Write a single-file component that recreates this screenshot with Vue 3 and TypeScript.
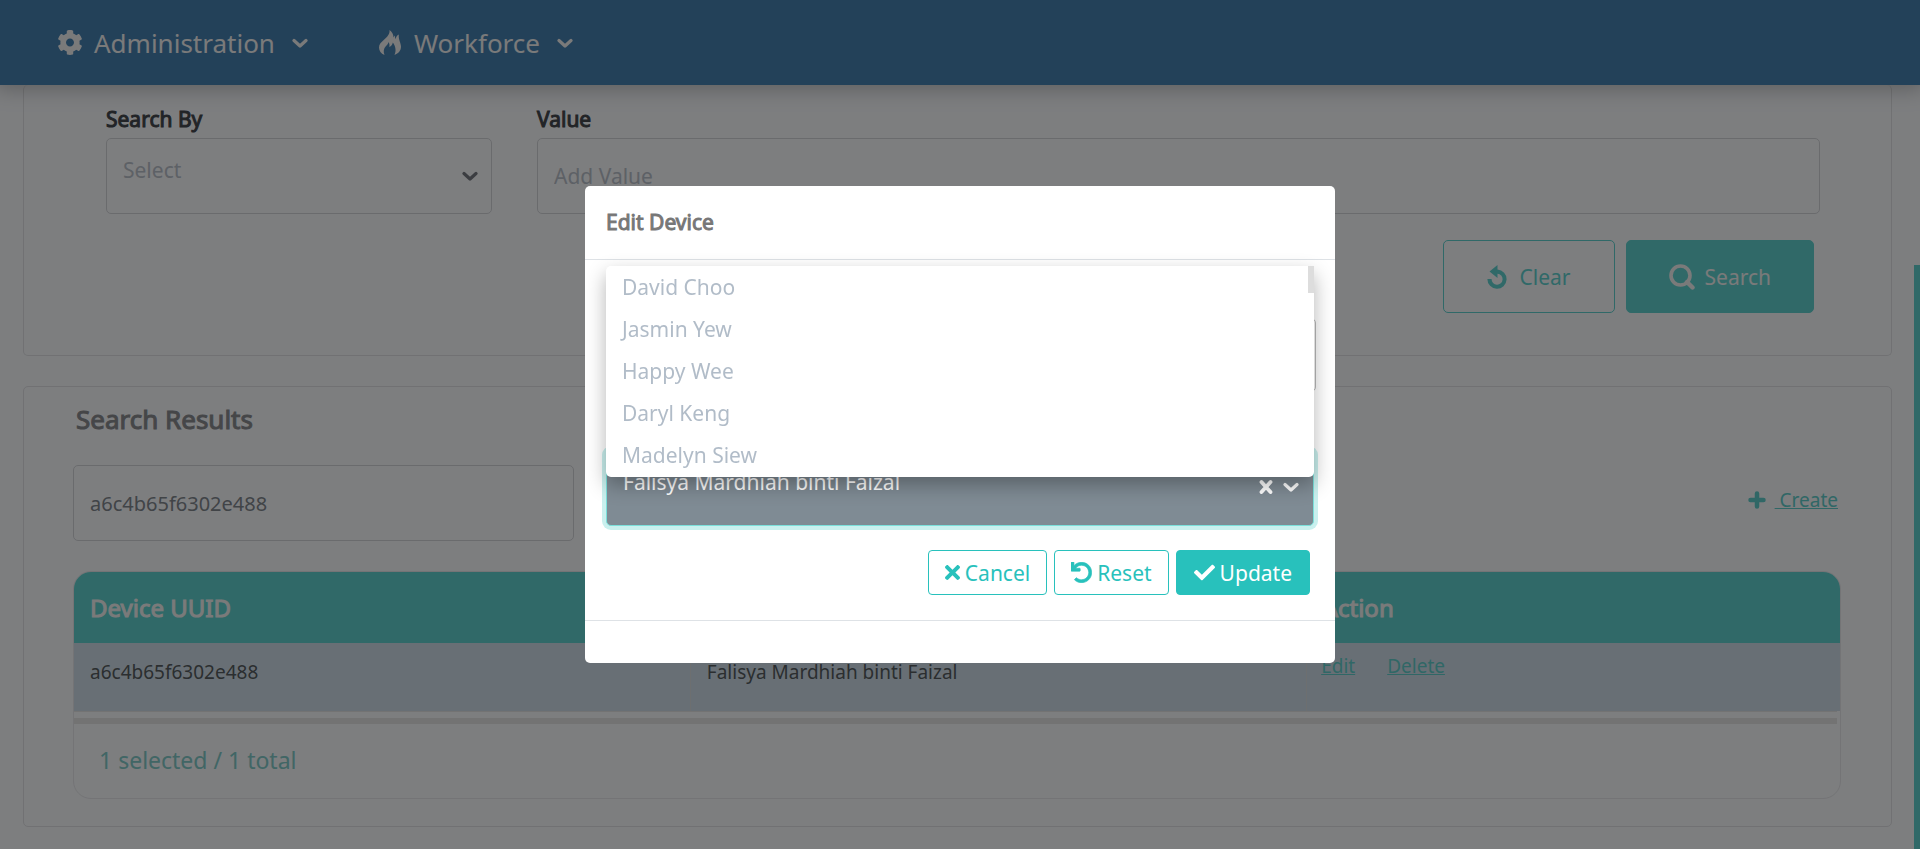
<script setup lang="ts">
import { ref } from 'vue'

const chevron = 'M2 3.500 L8 9 L14 3.500'
const menus = [
  { label: 'Administration', icon: 'gear' },
  { label: 'Workforce', icon: 'fire' },
]
const people = ['David Choo', 'Jasmin Yew', 'Happy Wee', 'Daryl Keng', 'Madelyn Siew']
const filter = ref('a6c4b65f6302e488')
const value = ref('')
const selected = 'Falisya Mardhiah binti Faizal'
const rows = [{ uuid: 'a6c4b65f6302e488', name: selected }]
</script>

<template>
  <div class="app">
    <header class="nav">
      <button v-for="m in menus" :key="m.label" type="button" class="nav-item">
        <svg v-if="m.icon === 'gear'" class="nav-icon" viewBox="16 8 480 496" aria-hidden="true">
          <path fill="currentColor" d="M487.4 315.7l-42.6-24.6c4.3-23.2 4.3-47 0-70.2l42.6-24.6c4.9-2.8 7.1-8.6 5.5-14-11.1-35.6-30-67.8-54.7-94.6-3.8-4.1-10-5.1-14.8-2.3L380.8 110c-17.9-15.4-38.5-27.3-60.8-35.1V25.8c0-5.6-3.9-10.5-9.4-11.7-36.7-8.2-74.3-7.8-109.2 0-5.5 1.2-9.4 6.1-9.4 11.7V75c-22.2 7.9-42.8 19.8-60.8 35.1L88.700 85.500c-4.900-2.800-11-1.900-14.800 2.300-24.700 26.700-43.600 58.900-54.700 94.600-1.700 5.400.6 11.200 5.500 14L67.300 221c-4.300 23.200-4.300 47 0 70.200l-42.600 24.600c-4.900 2.800-7.100 8.600-5.500 14 11.100 35.600 30 67.800 54.700 94.600 3.800 4.100 10 5.100 14.800 2.300l42.600-24.600c17.900 15.400 38.500 27.300 60.800 35.100v49.200c0 5.600 3.900 10.500 9.400 11.700 36.700 8.200 74.300 7.800 109.200 0 5.500-1.200 9.400-6.100 9.400-11.700v-49.200c22.200-7.900 42.800-19.800 60.800-35.100l42.600 24.600c4.900 2.800 11 1.900 14.800-2.300 24.700-26.700 43.600-58.900 54.700-94.600 1.500-5.500-.7-11.300-5.600-14.100zM256 336c-44.100 0-80-35.900-80-80s35.900-80 80-80 80 35.900 80 80-35.900 80-80 80z" />
        </svg>
        <svg v-else class="nav-icon" viewBox="0 0 24 25" aria-hidden="true">
          <path fill="currentColor" d="M11.500 0 C12 4 9.500 6.500 6.500 9.200 C3 12.300 1 14.300 1 17.500 C1 20.800 3 23.500 6.500 25 C5.200 21.500 5.500 18.500 8 16 C9.600 14.400 10.300 13.400 10.500 12 C11.500 13.500 11.700 15 11.300 17 C13.300 16 14.500 14.500 14.800 12.500 C17.500 16 18.500 20.500 16.500 25 C20.500 23.500 23 20.500 23 16.800 C23 12.800 20.300 10 20.800 4.500 C19 5.300 18 6.700 17.800 9 C17 7.800 16.800 6.800 17 5.500 C16.200 6 15.700 6.700 15.500 7.600 C15.500 4.500 14 1.700 11.500 0 Z" />
        </svg>
        <span>{{ m.label }}</span>
        <svg class="chev" viewBox="0 0 16 12" aria-hidden="true"><path :d="chevron" /></svg>
      </button>
    </header>

    <main class="content">
      <section class="card search-card">
        <div class="fields">
          <div class="field">
            <label for="search-by">Search By</label>
            <div class="select-wrap">
              <select id="search-by" class="control select">
                <option>Select</option>
              </select>
              <svg class="chev" viewBox="0 0 16 12" aria-hidden="true"><path :d="chevron" /></svg>
            </div>
          </div>
          <div class="field">
            <label for="search-value">Value</label>
            <input id="search-value" v-model="value" class="control" type="text" placeholder="Add Value" />
          </div>
        </div>
        <div class="actions">
          <button type="button" class="btn large outline">
            <svg class="icon-clear" viewBox="0 0 20 24" aria-hidden="true">
              <path fill="currentColor" d="M10.500 0 L10.500 4.600 A9.600 9.600 0 1 1 .400 14 L4.600 14 A5.500 5.500 0 1 0 10.500 8.700 L10.500 13 L2.500 6.500 Z" />
            </svg>
            Clear
          </button>
          <button type="button" class="btn large solid">
            <svg class="icon-search" viewBox="0 0 26 26" aria-hidden="true">
              <circle cx="11.500" cy="11.500" r="9.500" fill="none" stroke="currentColor" stroke-width="3.600" />
              <path d="M18 18 L23.500 23.500" stroke="currentColor" stroke-width="4.400" stroke-linecap="round" />
            </svg>
            Search
          </button>
        </div>
      </section>

      <section class="card result-card">
        <h2>Search Results</h2>
        <div class="toolbar">
          <input v-model="filter" class="control filter" type="text" aria-label="Filter results" />
          <a href="#create" class="create">
            <svg viewBox="0 0 18 18" aria-hidden="true"><path d="M9 2.500 V15.500 M2.500 9 H15.500" /></svg>
            <span>&nbsp;Create</span>
          </a>
        </div>
        <div class="grid">
          <table>
            <colgroup><col class="c-main" /><col class="c-main" /><col /></colgroup>
            <thead>
              <tr><th>Device UUID</th><th>User</th><th>Action</th></tr>
            </thead>
            <tbody>
              <tr v-for="r in rows" :key="r.uuid">
                <td>{{ r.uuid }}</td>
                <td>{{ r.name }}</td>
                <td class="links"><a href="#edit">Edit</a><a href="#delete">Delete</a></td>
              </tr>
            </tbody>
          </table>
          <div class="track"></div>
          <footer>{{ rows.length }} selected / {{ rows.length }} total</footer>
        </div>
      </section>
    </main>
    <div class="page-scroll"></div>

    <div class="overlay">
      <div class="modal" role="dialog" aria-modal="true" aria-labelledby="modal-title">
        <h3 id="modal-title">Edit Device</h3>
        <div class="modal-body">
          <input class="control uuid" type="text" aria-label="Device UUID" />
          <div class="picker-wrap">
            <div class="picker">
              <span class="picker-value">{{ selected }}</span>
              <button type="button" class="bare" aria-label="Clear selection">
                <svg class="clear-x" viewBox="0 0 14 16" aria-hidden="true"><path d="M2.500 3 L11.500 13 M11.500 3 L2.500 13" /></svg>
              </button>
              <button type="button" class="bare" aria-label="Toggle list">
                <svg class="chev" viewBox="0 0 16 12" aria-hidden="true"><path :d="chevron" /></svg>
              </button>
            </div>
            <ul class="menu" role="listbox" aria-label="Users">
              <li v-for="p in people" :key="p" role="option">{{ p }}</li>
              <li class="thumb" role="presentation"></li>
            </ul>
          </div>
          <div class="modal-actions">
            <button type="button" class="btn outline">
              <svg class="icon-x" viewBox="0 0 352 352" aria-hidden="true">
                <path fill="currentColor" d="M242.700 176 L342.800 75.900 c12.300-12.300 12.300-32.200 0-44.500 l-22.200-22.200 c-12.300-12.300-32.200-12.300-44.500 0 L176 109.300 L75.900 9.200 c-12.300-12.300-32.200-12.300-44.500 0 L9.200 31.400 c-12.300 12.300-12.300 32.200 0 44.500 L109.300 176 L9.200 276.100 c-12.300 12.300-12.300 32.200 0 44.500 l22.200 22.200 c12.300 12.300 32.200 12.300 44.500 0 L176 242.700 l100.100 100.100 c12.300 12.300 32.200 12.300 44.500 0 l22.200-22.200 c12.300-12.300 12.300-32.200 0-44.500 Z" />
              </svg>
              Cancel
            </button>
            <button type="button" class="btn outline">
              <svg class="icon-std" viewBox="0 0 512 512" aria-hidden="true">
                <path fill="currentColor" d="M212.333 224.333H12c-6.627 0-12-5.373-12-12V12C0 5.373 5.373 0 12 0h48c6.627 0 12 5.373 12 12v78.112C117.773 39.279 184.260 7.470 258.175 8.007c136.906.994 246.448 111.623 246.157 248.532C504.041 393.258 393.120 504 256.333 504c-64.089 0-122.496-24.313-166.510-64.215-5.099-4.622-5.334-12.554-.467-17.420l33.967-33.967c4.474-4.474 11.662-4.717 16.401-.525C170.760 415.336 211.580 432 256.333 432c97.268 0 176-78.716 176-176 0-97.267-78.716-176-176-176-58.496 0-110.280 28.476-142.274 72.333h98.274c6.627 0 12 5.373 12 12v48c0 6.627-5.373 12-12 12z" stroke="currentColor" stroke-width="16" />
              </svg>
              Reset
            </button>
            <button type="button" class="btn solid">
              <svg class="icon-std" viewBox="0 0 512 512" aria-hidden="true">
                <path fill="currentColor" d="M173.898 439.404l-166.400-166.400c-9.997-9.997-9.997-26.206 0-36.204l36.203-36.204c9.997-9.998 26.207-9.998 36.204 0L192 312.690 432.095 72.596c9.997-9.997 26.207-9.997 36.204 0l36.203 36.204c9.997 9.997 9.997 26.206 0 36.204l-294.400 294.401c-9.998 9.997-26.207 9.997-36.204-.001z" />
              </svg>
              Update
            </button>
          </div>
        </div>
      </div>
    </div>
  </div>
</template>

<style>
body { background: #fafcff; }
</style>

<style scoped>
.app {
  position: relative;
  min-height: 100vh;
  overflow: hidden;
  background: #fafcff;
  color: #393e46;
  font: 21px/30px "Noto Sans", sans-serif;
}
.app *, .app *::before { box-sizing: border-box; }
button, input, select { font: inherit; color: inherit; }
button { cursor: pointer; }
a { color: #61cfcc; }
svg { display: block; flex: none; }

.nav {
  position: relative;
  z-index: 1;
  display: flex;
  gap: 70px;
  height: 85px;
  padding: 0 58px;
  background: #4782b3;
  box-shadow: 0 0 20px 4px rgba(0, 0, 0, .25);
}
.nav-item {
  display: flex;
  align-items: center;
  padding: 0;
  border: 0;
  background: none;
  color: #f5f5f5;
  font-size: 26px;
}
.nav-icon { width: 24px; height: 25px; margin-right: 12px; }
.chev { width: 16px; height: 12px; }
.chev path { fill: none; stroke: currentColor; stroke-width: 3.200; stroke-linecap: round; stroke-linejoin: round; }
.nav-item .chev { margin-left: 17px; }

.content { padding: 0 28px 22px 23px; }
.card { border: 1px solid #e2e3e6; border-radius: 5px; }
.search-card { border-top: 0; padding: 16px 71px 42px 82px; }
.fields { display: grid; grid-template-columns: 386px 1fr; gap: 45px; }
.field label { display: block; height: 37px; line-height: 36px; color: #44484e; -webkit-text-stroke: 1px currentColor; }
.select-wrap { position: relative; }
.select-wrap .chev { position: absolute; right: 14px; top: 32px; color: #777b82; pointer-events: none; }
.control {
  display: block;
  width: 100%;
  height: 76px;
  padding: 0 16px;
  border: 1px solid #d5d7db;
  border-radius: 5px;
  background: transparent;
  outline: 0;
}
.control::placeholder { color: #bbc2cc; opacity: 1; }
.select { appearance: none; padding-bottom: 12px; color: #bbc2cc; }
.actions { display: flex; justify-content: flex-end; gap: 11px; margin: 26px 6px 0 0; }
.btn {
  display: flex;
  align-items: center;
  justify-content: center;
  gap: 5px;
  height: 45px;
  padding: 0 16px;
  border: 1px solid #28c1bc;
  border-radius: 4px;
  background: transparent;
  color: #28c1bc;
}
.btn.solid { padding: 0 17px; background: #28c1bc; color: #fff; }
.btn.large { height: 73px; gap: 13px; padding: 0 43px; border-color: #61d3d1; border-radius: 5px; color: #61d3d1; }
.btn.large.solid { gap: 10px; padding: 0 42px; background: #61d3d1; color: #f5f5f5; }
.icon-clear { width: 20px; height: 24px; }
.icon-search { width: 26px; height: 26px; }

.result-card { margin-top: 30px; padding: 14px 50px 27px 49px; }
h2 { margin: 0 0 0 3px; color: #8b8d91; font-size: 26px; font-weight: 400; line-height: 36px; -webkit-text-stroke: 1px currentColor; }
.toolbar { display: flex; justify-content: space-between; align-items: center; margin-top: 28px; }
.filter { width: 501px; color: #82888f; font-size: 20px; }
.create { display: flex; align-items: center; gap: 9px; margin: -6px 3px 0 0; font-size: 19px; text-decoration: none; }
.create span { text-decoration: underline; }
.create svg { width: 18px; height: 18px; }
.create path { stroke: currentColor; stroke-width: 4.500; stroke-linecap: round; }
.grid { overflow: hidden; margin-top: 30px; border: 1px solid #e8e9ec; border-radius: 18px; }
table { width: 100%; border-collapse: collapse; table-layout: fixed; text-align: left; }
.c-main { width: 34.9%; }
th { height: 71px; padding: 0 16px; background: #61d3d1; color: #f5f5f5; font-size: 24px; font-weight: 400; -webkit-text-stroke: 1px currentColor; }
tbody tr { background: #d1dfeb; }
td { height: 68px; padding: 13px 16px; border-right: 1px solid #dbdfe0; vertical-align: top; font-size: 19px; line-height: 32px; color: #565c60; }
td:last-child { border-right: 0; }
td.links { padding: 7px 14px; }
.links a { margin-right: 32px; }
.track { height: 13px; margin-right: 3px; border-top: 1px solid #e6e6e6; border-bottom: 6px solid #e6e6e6; }
footer { height: 74px; padding-left: 25px; color: #82cccb; font-size: 23px; line-height: 72px; }
.page-scroll { position: absolute; top: 265px; right: 0; bottom: 0; width: 6px; background: #61d3d1; }

.overlay {
  position: fixed;
  z-index: 2;
  inset: 0;
  display: flex;
  align-items: center;
  justify-content: center;
  background: rgba(0, 0, 0, .5);
}
.modal { width: 750px; max-width: 100%; border-radius: 5px; background: #fff; }
h3 { margin: 0; padding: 21px 21px 22px; border-bottom: 1px solid #dee2e6; color: #777; font-size: 21px; font-weight: 400; line-height: 30px; -webkit-text-stroke: 1px currentColor; }
.modal-body { padding: 58px 19px 25px 21px; border-bottom: 1px solid #dee2e6; margin-bottom: 42px; }
.uuid { height: 74px; border-color: #bbb; }
.picker-wrap { position: relative; margin: 58px 2px 0 0; }
.picker {
  display: flex;
  gap: 12px;
  height: 76px;
  padding: 24px 14px 0 16px;
  border: 1px solid #7be0db;
  border-radius: 5px;
  background: #7f8b94;
  box-shadow: 0 0 0 4px #c9f0ee;
  color: #fff;
}
.picker-value { flex: 1; margin-top: -8px; }
.bare { display: flex; align-items: center; height: 24px; padding: 0; border: 0; background: none; color: #fff; }
.clear-x { width: 14px; height: 16px; }
.clear-x path { fill: none; stroke: currentColor; stroke-width: 3.800; stroke-linecap: round; }
.picker .bare:first-of-type { margin-right: -2px; }
.menu {
  position: absolute;
  left: 0;
  right: 0;
  bottom: 49px;
  margin: 0;
  padding: 1px 0 0;
  border-radius: 5px;
  background: #fff;
  box-shadow: 0 8px 20px rgba(0, 0, 0, .3);
  list-style: none;
  color: #b1bcc8;
}
.menu li { height: 42px; padding: 0 16px; line-height: 40px; }
.menu .thumb { position: absolute; top: 0; right: 0; width: 6px; height: 27px; padding: 0; background: #ddd; }
.modal-actions { display: flex; justify-content: flex-end; gap: 7px; margin: 24px 6px 0 0; }
.icon-x { width: 15px; height: 15px; }
.icon-std { width: 21px; height: 21px; }
</style>
